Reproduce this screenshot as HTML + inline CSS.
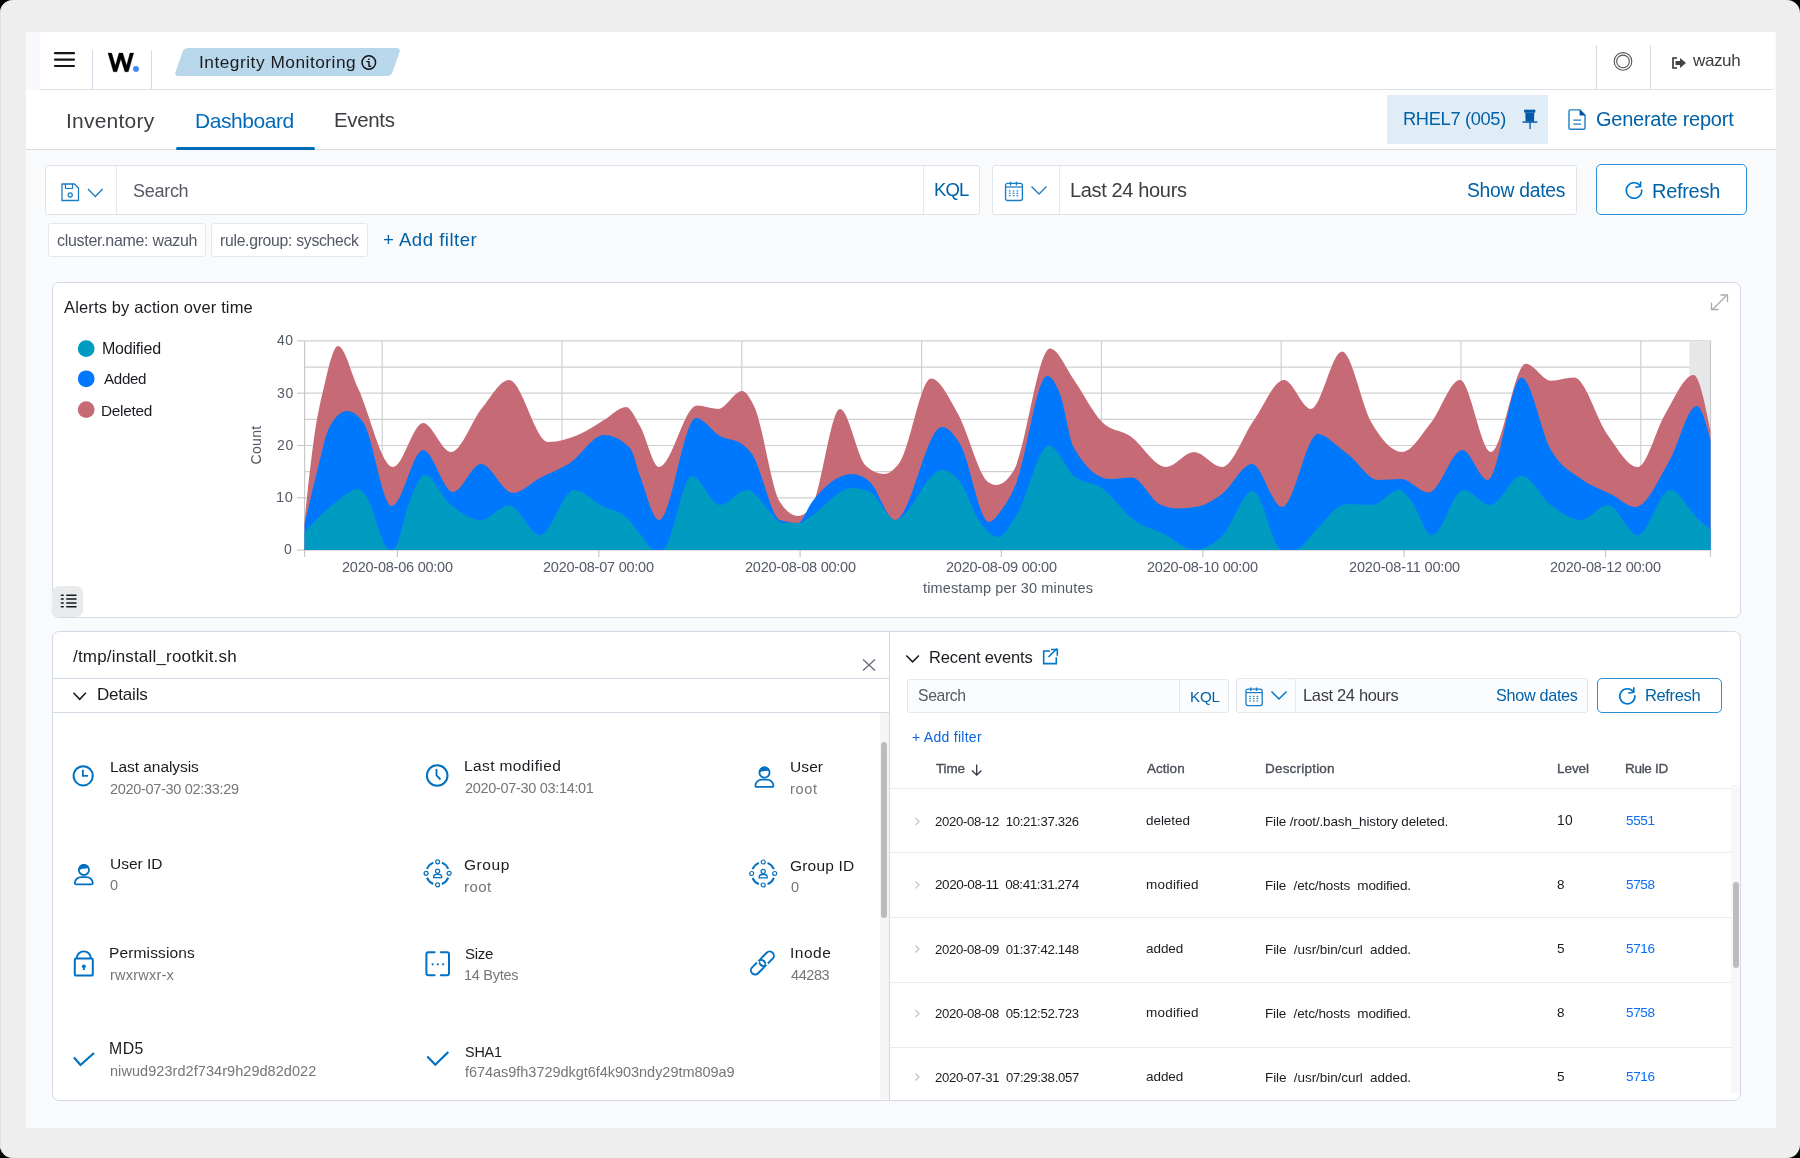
<!DOCTYPE html>
<html><head><meta charset="utf-8"><style>
html,body{margin:0;padding:0;width:1800px;height:1158px;overflow:hidden;background:#000}
body{position:relative;font-family:"Liberation Sans",sans-serif}
.t{position:absolute;white-space:pre;line-height:1;font-family:"Liberation Sans",sans-serif;-webkit-font-smoothing:antialiased;will-change:transform}
</style></head><body>
<div style="position:absolute;left:0px;top:0px;width:1800px;height:1158px;background:#000"></div>
<div style="position:absolute;left:0px;top:0px;width:1800px;height:1158px;background:#eeeeee;border-radius:13px;box-shadow:inset 1px 0 0 #e2e2e2"></div>
<div style="position:absolute;left:26px;top:32px;width:1750px;height:1096px;background:#f9fafc"></div>
<div style="position:absolute;left:26px;top:32px;width:1748px;height:58px;background:#fff"></div>
<div style="position:absolute;left:26px;top:32px;width:14px;height:58px;background:#f7f9fc"></div>
<div style="position:absolute;left:40px;top:89px;width:1733px;height:1.2px;background:#dcdfe4"></div>
<div style="position:absolute;left:92px;top:50px;width:1px;height:39px;background:#d3dae6"></div>
<div style="position:absolute;left:151px;top:50px;width:1px;height:39px;background:#d3dae6"></div>
<div style="position:absolute;left:1596px;top:45px;width:1px;height:44px;background:#d9d9d9"></div>
<div style="position:absolute;left:1650px;top:45px;width:1px;height:44px;background:#d9d9d9"></div>
<div style="position:absolute;left:178.7px;top:48px;width:217.4px;height:28.3px;background:#b9d7ea;border-radius:4px;transform:skewX(-19.5deg)"></div>
<div style="position:absolute;left:26px;top:90px;width:1750px;height:59px;background:#fff"></div>
<div style="position:absolute;left:26px;top:149px;width:1750px;height:1px;background:#d9dce1"></div>
<div style="position:absolute;left:176px;top:147px;width:139px;height:3px;background:#006bb8;border-radius:2px"></div>
<div style="position:absolute;left:1387px;top:94.5px;width:161px;height:49.5px;background:#e0ecf6"></div>
<div style="position:absolute;left:45px;top:165px;width:935px;height:50px;background:#fff;border:1px solid #e0e3e8;border-radius:3px;box-sizing:border-box"></div>
<div style="position:absolute;left:116px;top:166px;width:1px;height:48px;background:#e6e8ec"></div>
<div style="position:absolute;left:923px;top:166px;width:1px;height:48px;background:#e6e8ec"></div>
<div style="position:absolute;left:992px;top:165px;width:585px;height:50px;background:#fff;border:1px solid #e0e3e8;border-radius:3px;box-sizing:border-box"></div>
<div style="position:absolute;left:1059px;top:166px;width:1px;height:48px;background:#e6e8ec"></div>
<div style="position:absolute;left:1596px;top:164px;width:151px;height:51px;background:#fff;border:1.5px solid #2b8fd6;border-radius:5px;box-sizing:border-box"></div>
<div style="position:absolute;left:48px;top:223px;width:158px;height:34px;background:#fff;border:1px solid #e6e8ec;border-radius:3px;box-sizing:border-box"></div>
<div style="position:absolute;left:211px;top:223px;width:157px;height:34px;background:#fff;border:1px solid #e6e8ec;border-radius:3px;box-sizing:border-box"></div>
<div style="position:absolute;left:51.5px;top:281.5px;width:1689.5px;height:336px;background:#fff;border:1px solid #d3dae6;border-radius:7px;box-sizing:border-box"></div>
<div style="position:absolute;left:52px;top:586px;width:31px;height:31px;background:#e9eaeb;border-radius:7px 7px 7px 7px"></div>
<div style="position:absolute;left:51.5px;top:630.5px;width:1689.5px;height:470px;background:#fff;border:1px solid #d3dae6;border-radius:7px;box-sizing:border-box"></div>
<div style="position:absolute;left:889px;top:631px;width:1px;height:469px;background:#d3dae6"></div>
<div style="position:absolute;left:52px;top:678px;width:837px;height:1px;background:#d3dae6"></div>
<div style="position:absolute;left:52px;top:712px;width:837px;height:1px;background:#d3dae6"></div>
<div style="position:absolute;left:880px;top:713px;width:9px;height:386px;background:#f5f5f5"></div>
<div style="position:absolute;left:881px;top:742px;width:6px;height:176px;background:#bcbcbc;border-radius:3px"></div>
<div style="position:absolute;left:906.5px;top:678.5px;width:322px;height:34px;background:#fbfcfd;border:1px solid #e3e6ea;border-radius:3px;box-sizing:border-box"></div>
<div style="position:absolute;left:1178.5px;top:679px;width:1px;height:33px;background:#e6e8ec"></div>
<div style="position:absolute;left:1236px;top:678px;width:352px;height:35px;background:#fbfcfd;border:1px solid #e3e6ea;border-radius:3px;box-sizing:border-box"></div>
<div style="position:absolute;left:1295px;top:679px;width:1px;height:33px;background:#e6e8ec"></div>
<div style="position:absolute;left:1597px;top:678px;width:125px;height:35px;background:#fff;border:1.5px solid #2b8fd6;border-radius:5px;box-sizing:border-box"></div>
<div style="position:absolute;left:890px;top:788px;width:841px;height:1.2px;background:#e9ebee"></div>
<div style="position:absolute;left:890px;top:852px;width:841px;height:1.2px;background:#e9ebee"></div>
<div style="position:absolute;left:890px;top:916.5px;width:841px;height:1.2px;background:#e9ebee"></div>
<div style="position:absolute;left:890px;top:981.5px;width:841px;height:1.2px;background:#e9ebee"></div>
<div style="position:absolute;left:890px;top:1047px;width:841px;height:1.2px;background:#e9ebee"></div>
<div style="position:absolute;left:1731px;top:785px;width:9px;height:308px;background:#f7f7f7"></div>
<div style="position:absolute;left:1732.5px;top:882px;width:6px;height:86px;background:#bcbcbc;border-radius:3px"></div>
<svg style="position:absolute;left:0;top:0" width="1800" height="1158" viewBox="0 0 1800 1158"><line x1="55" y1="53.2" x2="74" y2="53.2" stroke="#15171c" stroke-width="2.2" stroke-linecap="round"/><line x1="55" y1="59.6" x2="74" y2="59.6" stroke="#15171c" stroke-width="2.2" stroke-linecap="round"/><line x1="55" y1="66" x2="74" y2="66" stroke="#15171c" stroke-width="2.2" stroke-linecap="round"/><circle cx="136" cy="68.9" r="2.9" fill="#3a86f5"/><path d="M108,53 L111.7,53 L115.4,65.6 L119,53 L122.7,53 L126.6,65.4 L130,53 L133.7,53 L128.3,71.8 L124.9,71.8 L120.85,58.9 L116.9,71.8 L113.4,71.8 Z" fill="#000" stroke="#000" stroke-width="0.3" stroke-linejoin="round"/><circle cx="368.8" cy="62.5" r="6.8" fill="none" stroke="#111" stroke-width="1.5"/><path d="M366.9,61.6 h2.1 v4.6 h1.5" fill="none" stroke="#111" stroke-width="1.4" stroke-linecap="round" stroke-linejoin="round"/><rect x="368.1" y="58.4" width="1.6" height="1.5" rx="0.5" fill="#111"/><circle cx="1623" cy="61.4" r="8.8" fill="none" stroke="#555" stroke-width="1.1"/><circle cx="1623" cy="61.4" r="6.3" fill="none" stroke="#555" stroke-width="1.1"/><path d="M1677,58 h-4 v10 h4" fill="none" stroke="#333" stroke-width="1.6"/><path d="M1675.5,61 h4.5 v-3 l6,5 l-6,5 v-3 h-4.5z" fill="#444"/><rect x="1524.1" y="109.7" width="11.2" height="2.9" fill="#0058a8"/><path d="M1525.3,112.5 h9 l-0.3,9 h-8.4z" fill="#0058a8"/><rect x="1522.6" y="121.3" width="14.6" height="1.5" fill="#0058a8"/><rect x="1529.4" y="122.5" width="1.3" height="6.6" fill="#0058a8"/><path d="M1570.2,109.9 h9.8 l5,5 v13.1 a1.2,1.2 0 0 1 -1.2,1.2 h-13.6 a1.2,1.2 0 0 1 -1.2,-1.2 v-16.9 a1.2,1.2 0 0 1 1.2,-1.2z" fill="none" stroke="#1f7fc4" stroke-width="1.4" stroke-linejoin="round"/><path d="M1579.6,109.6 l5.9,5.9 h-5.9z" fill="#0050a0"/><path d="M1573.2,120.2 h7.8 M1573.2,124.1 h7.8" stroke="#1f7fc4" stroke-width="1.3"/><path d="M62,184 h12.5 l4,4 v12.5 h-16.5z" fill="none" stroke="#1a7cc4" stroke-width="1.3" stroke-linejoin="round"/><path d="M65.5,184 v4.5 h7 v-4.5" fill="none" stroke="#1a7cc4" stroke-width="1.2"/><circle cx="70.2" cy="195" r="2.1" fill="none" stroke="#1a7cc4" stroke-width="1.2"/><path d="M88,189 l7.3,7.5 l7.3,-7.5" fill="none" stroke="#1a7cc4" stroke-width="1.3"/><g transform="translate(1004.5,181.4) scale(1.04)"><rect x="1.0" y="1.9" width="16.2" height="16.5" rx="2" fill="none" stroke="#1a7cc4" stroke-width="1.3"/><path d="M1,5.4 h16.2" stroke="#1a7cc4" stroke-width="1.2"/><path d="M5.8,0.3 v3.6 M11.5,0.3 v3.6" stroke="#1a7cc4" stroke-width="1.4"/><rect x="4.15" y="8.649999999999999" width="1.7" height="1.1" fill="#1a7cc4"/><rect x="7.85" y="8.649999999999999" width="1.7" height="1.1" fill="#1a7cc4"/><rect x="11.55" y="8.649999999999999" width="1.7" height="1.1" fill="#1a7cc4"/><rect x="4.15" y="10.85" width="1.7" height="1.1" fill="#1a7cc4"/><rect x="7.85" y="10.85" width="1.7" height="1.1" fill="#1a7cc4"/><rect x="11.55" y="10.85" width="1.7" height="1.1" fill="#1a7cc4"/><rect x="4.15" y="13.25" width="1.7" height="1.1" fill="#1a7cc4"/><rect x="7.85" y="13.25" width="1.7" height="1.1" fill="#1a7cc4"/><rect x="11.55" y="13.25" width="1.7" height="1.1" fill="#1a7cc4"/></g><path d="M1031.5,186.5 l7.5,7.5 l7.5,-7.5" fill="none" stroke="#1a7cc4" stroke-width="1.3"/><path d="M1641.68,189.96 A7.7,7.7 0 1 1 1640.53,186.42" fill="none" stroke="#0077cc" stroke-width="1.6" stroke-linecap="round"/><path d="M1640.63,182.02 L1640.53,186.42 L1635.73,187.22" fill="none" stroke="#0077cc" stroke-width="1.6" stroke-linecap="round" stroke-linejoin="round"/><path d="M1712,300 l14,-14" stroke="#aaa" stroke-width="1.3" transform="translate(0,10)"/><path d="M1720.5,295 h7 v7 M1711.5,302.5 v7 h7" fill="none" stroke="#aaa" stroke-width="1.3"/><path d="M61.4,595.3 h1.8 M66.8,595.3 h9.2" stroke="#15171c" stroke-width="1.5" stroke-linecap="round"/><path d="M61.4,599.1 h1.8 M66.8,599.1 h9.2" stroke="#15171c" stroke-width="1.5" stroke-linecap="round"/><path d="M61.4,602.9 h1.8 M66.8,602.9 h9.2" stroke="#15171c" stroke-width="1.5" stroke-linecap="round"/><path d="M61.4,606.7 h1.8 M66.8,606.7 h9.2" stroke="#15171c" stroke-width="1.5" stroke-linecap="round"/><circle cx="86.2" cy="348.6" r="8.4" fill="#009bc0"/><circle cx="86.2" cy="378.8" r="8.4" fill="#0078fd"/><circle cx="86.2" cy="409.6" r="8.4" fill="#c66b75"/><line x1="304.6" y1="340.90" x2="1710.5" y2="340.90" stroke="#d0d0d0" stroke-width="1.2"/><line x1="304.6" y1="367.05" x2="1710.5" y2="367.05" stroke="#d0d0d0" stroke-width="1.2"/><line x1="304.6" y1="393.20" x2="1710.5" y2="393.20" stroke="#d0d0d0" stroke-width="1.2"/><line x1="304.6" y1="419.35" x2="1710.5" y2="419.35" stroke="#d0d0d0" stroke-width="1.2"/><line x1="304.6" y1="445.50" x2="1710.5" y2="445.50" stroke="#d0d0d0" stroke-width="1.2"/><line x1="304.6" y1="471.65" x2="1710.5" y2="471.65" stroke="#d0d0d0" stroke-width="1.2"/><line x1="304.6" y1="497.80" x2="1710.5" y2="497.80" stroke="#d0d0d0" stroke-width="1.2"/><line x1="304.6" y1="523.95" x2="1710.5" y2="523.95" stroke="#d0d0d0" stroke-width="1.2"/><line x1="304.6" y1="550.10" x2="1710.5" y2="550.10" stroke="#d0d0d0" stroke-width="1.2"/><line x1="382.2" y1="340.9" x2="382.2" y2="550.1" stroke="#d0d0d0" stroke-width="1.2"/><line x1="562" y1="340.9" x2="562" y2="550.1" stroke="#d0d0d0" stroke-width="1.2"/><line x1="741.8" y1="340.9" x2="741.8" y2="550.1" stroke="#d0d0d0" stroke-width="1.2"/><line x1="921.6" y1="340.9" x2="921.6" y2="550.1" stroke="#d0d0d0" stroke-width="1.2"/><line x1="1101.4" y1="340.9" x2="1101.4" y2="550.1" stroke="#d0d0d0" stroke-width="1.2"/><line x1="1281.2" y1="340.9" x2="1281.2" y2="550.1" stroke="#d0d0d0" stroke-width="1.2"/><line x1="1461" y1="340.9" x2="1461" y2="550.1" stroke="#d0d0d0" stroke-width="1.2"/><line x1="1640.8" y1="340.9" x2="1640.8" y2="550.1" stroke="#d0d0d0" stroke-width="1.2"/><rect x="1689.4" y="340.9" width="21.09999999999991" height="209.20000000000005" fill="#e6e7e8"/><line x1="1710.5" y1="340.9" x2="1710.5" y2="550.1" stroke="#c8c8c8" stroke-width="1.2"/><line x1="304.6" y1="340.9" x2="304.6" y2="557.1" stroke="#c8c8c8" stroke-width="1.2"/><line x1="297" y1="340.90" x2="304.6" y2="340.90" stroke="#c8c8c8" stroke-width="1.2"/><line x1="297" y1="393.20" x2="304.6" y2="393.20" stroke="#c8c8c8" stroke-width="1.2"/><line x1="297" y1="445.50" x2="304.6" y2="445.50" stroke="#c8c8c8" stroke-width="1.2"/><line x1="297" y1="497.80" x2="304.6" y2="497.80" stroke="#c8c8c8" stroke-width="1.2"/><line x1="297" y1="550.10" x2="304.6" y2="550.10" stroke="#c8c8c8" stroke-width="1.2"/><line x1="397.4" y1="550.1" x2="397.4" y2="557.1" stroke="#c8c8c8" stroke-width="1.2"/><line x1="598.8" y1="550.1" x2="598.8" y2="557.1" stroke="#c8c8c8" stroke-width="1.2"/><line x1="800.1" y1="550.1" x2="800.1" y2="557.1" stroke="#c8c8c8" stroke-width="1.2"/><line x1="1001.4" y1="550.1" x2="1001.4" y2="557.1" stroke="#c8c8c8" stroke-width="1.2"/><line x1="1202.8" y1="550.1" x2="1202.8" y2="557.1" stroke="#c8c8c8" stroke-width="1.2"/><line x1="1404.2" y1="550.1" x2="1404.2" y2="557.1" stroke="#c8c8c8" stroke-width="1.2"/><line x1="1605.5" y1="550.1" x2="1605.5" y2="557.1" stroke="#c8c8c8" stroke-width="1.2"/><line x1="1710.5" y1="550.1" x2="1710.5" y2="557.1" stroke="#c8c8c8" stroke-width="1.2"/><path d="M304.6,520.0C308.2,485.6 311.9,451.1 315.5,428.0C318.0,412.1 320.5,401.7 323.0,391.0C328.0,369.6 333.0,346.0 338.0,346.0C344.7,346.0 351.3,373.6 358.0,388.0C369.7,413.2 381.3,467.0 393.0,467.0C403.0,467.0 413.0,423.0 423.0,423.0C432.3,423.0 441.7,452.0 451.0,452.0C461.3,452.0 471.7,420.6 482.0,408.0C491.0,397.1 500.0,380.0 509.0,380.0C522.0,380.0 535.0,442.0 548.0,442.0C558.7,442.0 569.3,438.7 580.0,434.0C588.0,430.5 596.0,424.7 604.0,420.0C611.3,415.7 618.7,407.0 626.0,407.0C630.7,407.0 635.3,418.1 640.0,426.0C646.3,436.7 652.7,467.0 659.0,467.0C671.7,467.0 684.3,405.6 697.0,405.6C704.0,405.6 711.0,409.0 718.0,409.0C726.0,409.0 734.0,391.0 742.0,391.0C746.0,391.0 750.0,397.9 754.0,406.0C762.7,423.5 771.3,488.5 780.0,502.0C786.0,511.3 792.0,516.0 798.0,516.0C802.7,516.0 807.3,512.7 812.0,506.0C821.3,492.7 830.7,409.0 840.0,409.0C848.7,409.0 857.3,458.3 866.0,466.0C872.0,471.3 878.0,474.0 884.0,474.0C889.3,474.0 894.7,469.5 900.0,462.0C910.3,447.4 920.7,378.6 931.0,378.6C940.0,378.6 949.0,398.1 958.0,414.0C968.0,431.6 978.0,474.5 988.0,482.0C990.7,484.0 993.3,485.0 996.0,485.0C1002.0,485.0 1008.0,480.0 1014.0,470.0C1026.0,450.0 1038.0,348.6 1050.0,348.6C1058.0,348.6 1066.0,368.8 1074.0,380.0C1083.3,393.0 1092.7,412.7 1102.0,422.0C1111.3,431.3 1120.7,429.9 1130.0,436.0C1142.0,443.9 1154.0,467.0 1166.0,467.0C1175.3,467.0 1184.7,452.0 1194.0,452.0C1203.3,452.0 1212.7,467.0 1222.0,467.0C1232.7,467.0 1243.3,434.9 1254.0,420.0C1264.0,406.0 1274.0,380.0 1284.0,380.0C1293.0,380.0 1302.0,409.0 1311.0,409.0C1321.3,409.0 1331.7,351.6 1342.0,351.6C1351.9,351.6 1361.8,406.3 1371.7,423.0C1381.8,440.0 1391.9,452.0 1402.0,452.0C1411.6,452.0 1421.2,434.9 1430.8,423.0C1440.5,410.9 1450.3,380.0 1460.0,380.0C1470.3,380.0 1480.7,452.0 1491.0,452.0C1502.6,452.0 1514.2,363.8 1525.8,363.8C1534.2,363.8 1542.6,380.7 1551.0,380.7C1558.7,380.7 1566.3,377.5 1574.0,377.5C1585.3,377.5 1596.7,420.1 1608.0,435.5C1617.9,449.0 1627.8,467.0 1637.7,467.0C1646.8,467.0 1655.9,429.5 1665.0,414.4C1674.5,398.6 1684.1,375.0 1693.6,375.0C1699.2,375.0 1704.9,403.0 1710.5,431.0L1710.5,550.1L304.6,550.1Z" fill="#c66b75"/><path d="M304.6,524.0C308.4,507.5 312.2,490.9 316.0,476.0C320.7,457.7 325.3,434.2 330.0,426.0C335.7,416.0 341.3,411.0 347.0,411.0C352.3,411.0 357.7,414.7 363.0,422.0C372.7,435.3 382.3,506.0 392.0,506.0C402.3,506.0 412.7,450.0 423.0,450.0C433.0,450.0 443.0,492.0 453.0,492.0C462.3,492.0 471.7,464.0 481.0,464.0C491.7,464.0 502.3,493.0 513.0,493.0C522.0,493.0 531.0,482.8 540.0,478.0C550.0,472.7 560.0,469.5 570.0,463.0C581.3,455.6 592.7,435.0 604.0,435.0C612.7,435.0 621.3,439.3 630.0,448.0C633.3,451.3 636.7,467.2 640.0,476.0C646.3,492.7 652.7,520.0 659.0,520.0C671.3,520.0 683.7,418.0 696.0,418.0C704.0,418.0 712.0,431.6 720.0,436.0C727.3,440.0 734.7,438.7 742.0,444.0C745.3,446.4 748.7,449.5 752.0,454.0C761.3,466.7 770.7,516.9 780.0,520.0C786.0,522.0 792.0,523.0 798.0,523.0C802.7,523.0 807.3,508.0 812.0,502.0C825.3,484.8 838.7,474.0 852.0,474.0C858.0,474.0 864.0,476.7 870.0,482.0C878.3,489.4 886.7,520.0 895.0,520.0C910.7,520.0 926.3,427.0 942.0,427.0C948.0,427.0 954.0,434.3 960.0,444.0C969.7,459.6 979.3,522.0 989.0,522.0C992.7,522.0 996.3,516.6 1000.0,512.0C1005.3,505.3 1010.7,496.5 1016.0,484.0C1026.3,459.8 1036.7,376.0 1047.0,376.0C1051.3,376.0 1055.7,382.8 1060.0,394.0C1064.7,406.0 1069.3,440.0 1074.0,448.0C1086.0,468.7 1098.0,479.0 1110.0,479.0C1117.3,479.0 1124.7,477.6 1132.0,477.6C1141.3,477.6 1150.7,500.4 1160.0,504.5C1166.0,507.2 1172.0,508.5 1178.0,508.5C1184.7,508.5 1191.3,507.8 1198.0,506.5C1206.0,504.9 1214.0,499.9 1222.0,494.0C1232.0,486.7 1242.0,464.0 1252.0,464.0C1262.0,464.0 1272.0,507.0 1282.0,507.0C1294.0,507.0 1306.0,434.0 1318.0,434.0C1325.3,434.0 1332.7,442.5 1340.0,448.0C1343.3,450.5 1346.7,453.3 1350.0,456.0C1359.3,463.6 1368.7,480.0 1378.0,480.0C1385.7,480.0 1393.3,479.0 1401.0,479.0C1410.2,479.0 1419.5,492.5 1428.7,492.5C1439.9,492.5 1451.2,450.0 1462.4,450.0C1470.9,450.0 1479.3,480.0 1487.8,480.0C1499.0,480.0 1510.3,377.5 1521.5,377.5C1531.3,377.5 1541.2,433.0 1551.0,450.0C1561.6,468.3 1572.2,472.4 1582.8,480.0C1592.5,486.9 1602.3,489.7 1612.0,494.7C1619.8,498.7 1627.7,507.0 1635.5,507.0C1646.8,507.0 1658.0,480.3 1669.3,461.0C1678.5,445.3 1687.6,406.0 1696.8,406.0C1701.4,406.0 1705.9,422.9 1710.5,439.8L1710.5,550.1L304.6,550.1Z" fill="#0078fd"/><path d="M304.6,532.0C315.1,520.9 325.5,509.8 336.0,502.0C343.3,496.6 350.7,489.0 358.0,489.0C360.7,489.0 363.3,492.8 366.0,496.0C374.0,505.8 382.0,550.0 390.0,550.0C391.3,550.0 392.7,549.7 394.0,549.0C399.3,546.3 404.7,512.5 410.0,500.0C415.0,488.3 420.0,475.0 425.0,475.0C433.3,475.0 441.7,496.7 450.0,504.0C460.3,513.0 470.7,520.0 481.0,520.0C490.3,520.0 499.7,505.6 509.0,505.6C519.3,505.6 529.7,535.0 540.0,535.0C551.3,535.0 562.7,490.0 574.0,490.0C583.3,490.0 592.7,501.0 602.0,506.0C610.7,510.6 619.3,510.3 628.0,519.0C632.0,523.0 636.0,529.3 640.0,534.0C645.0,539.8 650.0,550.0 655.0,550.0C657.3,550.0 659.7,550.0 662.0,550.0C672.0,550.0 682.0,476.0 692.0,476.0C701.3,476.0 710.7,505.0 720.0,505.0C729.0,505.0 738.0,490.0 747.0,490.0C759.3,490.0 771.7,523.0 784.0,523.0C789.3,523.0 794.7,523.0 800.0,523.0C803.3,523.0 806.7,519.1 810.0,517.0C824.0,508.4 838.0,488.0 852.0,488.0C858.0,488.0 864.0,489.3 870.0,492.0C878.3,495.7 886.7,520.0 895.0,520.0C910.7,520.0 926.3,470.0 942.0,470.0C948.0,470.0 954.0,474.2 960.0,482.0C966.7,490.7 973.3,512.8 980.0,522.0C986.0,530.3 992.0,537.0 998.0,537.0C1004.0,537.0 1010.0,525.0 1016.0,516.0C1027.0,499.4 1038.0,445.6 1049.0,445.6C1057.3,445.6 1065.7,469.0 1074.0,476.0C1083.3,483.9 1092.7,481.5 1102.0,488.0C1112.7,495.4 1123.3,512.3 1134.0,520.0C1144.0,527.2 1154.0,529.0 1164.0,534.0C1174.0,539.0 1184.0,550.0 1194.0,550.0C1203.3,550.0 1212.7,544.9 1222.0,536.0C1232.3,526.2 1242.7,491.0 1253.0,491.0C1262.7,491.0 1272.3,550.0 1282.0,550.0C1286.0,550.0 1290.0,550.0 1294.0,550.0C1302.0,550.0 1310.0,535.7 1318.0,528.0C1325.3,521.0 1332.7,509.3 1340.0,506.0C1342.7,504.8 1345.3,504.0 1348.0,504.0C1356.0,504.0 1364.0,505.0 1372.0,505.0C1381.0,505.0 1390.0,490.0 1399.0,490.0C1402.7,490.0 1406.3,495.0 1410.0,499.0C1417.3,507.0 1424.7,535.0 1432.0,535.0C1442.5,535.0 1453.0,490.0 1463.5,490.0C1472.3,490.0 1481.2,505.0 1490.0,505.0C1500.5,505.0 1511.0,475.7 1521.5,475.7C1531.3,475.7 1541.2,497.6 1551.0,505.0C1560.9,512.4 1570.8,520.0 1580.7,520.0C1589.8,520.0 1598.9,505.0 1608.0,505.0C1617.9,505.0 1627.8,535.0 1637.7,535.0C1648.5,535.0 1659.2,490.0 1670.0,490.0C1679.7,490.0 1689.3,511.4 1699.0,520.0C1702.8,523.4 1706.7,526.4 1710.5,529.5L1710.5,550.1L304.6,550.1Z" fill="#009bc0"/><path d="M863,659.5 l12,11 M875,659.5 l-12,11" stroke="#69707d" stroke-width="1.4"/><path d="M73.5,692.8 l6.2,6.5 l6.2,-6.5" fill="none" stroke="#1a1c21" stroke-width="1.6"/><path d="M906.3,655.5 l6.3,6.3 l6.3,-6.3" fill="none" stroke="#1a1c21" stroke-width="1.6"/><path d="M1050,651 h-6.3 v12.6 h12.6 v-6.3" fill="none" stroke="#0077cc" stroke-width="1.6"/><path d="M1048.5,657 l8.5,-8.5 M1051,649.5 h6.3 v6.3" fill="none" stroke="#0077cc" stroke-width="1.6"/><g transform="translate(1245,687.2) scale(1.0)"><rect x="1.0" y="1.9" width="16.2" height="16.5" rx="2" fill="none" stroke="#1a7cc4" stroke-width="1.3"/><path d="M1,5.4 h16.2" stroke="#1a7cc4" stroke-width="1.2"/><path d="M5.8,0.3 v3.6 M11.5,0.3 v3.6" stroke="#1a7cc4" stroke-width="1.4"/><rect x="4.15" y="8.649999999999999" width="1.7" height="1.1" fill="#1a7cc4"/><rect x="7.85" y="8.649999999999999" width="1.7" height="1.1" fill="#1a7cc4"/><rect x="11.55" y="8.649999999999999" width="1.7" height="1.1" fill="#1a7cc4"/><rect x="4.15" y="10.85" width="1.7" height="1.1" fill="#1a7cc4"/><rect x="7.85" y="10.85" width="1.7" height="1.1" fill="#1a7cc4"/><rect x="11.55" y="10.85" width="1.7" height="1.1" fill="#1a7cc4"/><rect x="4.15" y="13.25" width="1.7" height="1.1" fill="#1a7cc4"/><rect x="7.85" y="13.25" width="1.7" height="1.1" fill="#1a7cc4"/><rect x="11.55" y="13.25" width="1.7" height="1.1" fill="#1a7cc4"/></g><path d="M1271.5,691.5 l7.5,7.5 l7.5,-7.5" fill="none" stroke="#0077cc" stroke-width="1.5"/><path d="M1634.88,695.77 A7.6,7.6 0 1 1 1633.75,692.27" fill="none" stroke="#0077cc" stroke-width="1.6" stroke-linecap="round"/><path d="M1633.85,687.87 L1633.75,692.27 L1628.95,693.07" fill="none" stroke="#0077cc" stroke-width="1.6" stroke-linecap="round" stroke-linejoin="round"/><path d="M976.7,764.5 v10.5 M972,770.5 l4.7,4.7 l4.7,-4.7" fill="none" stroke="#343741" stroke-width="1.3"/><path d="M915.5,817.9 l3.5,3.5 l-3.5,3.5" fill="none" stroke="#b8c2d0" stroke-width="1.2"/><path d="M915.5,881.3 l3.5,3.5 l-3.5,3.5" fill="none" stroke="#b8c2d0" stroke-width="1.2"/><path d="M915.5,945.5 l3.5,3.5 l-3.5,3.5" fill="none" stroke="#b8c2d0" stroke-width="1.2"/><path d="M915.5,1010.0 l3.5,3.5 l-3.5,3.5" fill="none" stroke="#b8c2d0" stroke-width="1.2"/><path d="M915.5,1073.5 l3.5,3.5 l-3.5,3.5" fill="none" stroke="#b8c2d0" stroke-width="1.2"/><circle cx="83.2" cy="775.8" r="9.6" fill="none" stroke="#0071c2" stroke-width="2"/><path d="M82.9,769.8 v6 h5" fill="none" stroke="#0071c2" stroke-width="1.8"/><circle cx="437.2" cy="775.5" r="10.3" fill="none" stroke="#0071c2" stroke-width="2"/><path d="M436.5,769 v6.5 l4,4" fill="none" stroke="#0071c2" stroke-width="1.8"/><g transform="translate(74,864)"><circle cx="9.9" cy="5.9" r="5.1" fill="none" stroke="#0071c2" stroke-width="1.8"/><path d="M4.8,5.9 Q9,3.9 14.9,4.2 A5.1,5.1 0 0 0 4.8,5.9 Z" fill="#0071c2"/><path d="M2.2,20.3 h15.4 a1.2,1.2 0 0 0 1.2,-1.2 c0,-3.6 -3,-6 -6.6,-6 h-4.8 c-3.6,0 -6.6,2.4 -6.6,6 a1.2,1.2 0 0 0 1.2,1.2 z" fill="none" stroke="#0071c2" stroke-width="1.8" stroke-linejoin="round"/></g><g transform="translate(754.6,766.6)"><circle cx="9.9" cy="5.9" r="5.1" fill="none" stroke="#0071c2" stroke-width="1.8"/><path d="M4.8,5.9 Q9,3.9 14.9,4.2 A5.1,5.1 0 0 0 4.8,5.9 Z" fill="#0071c2"/><path d="M2.2,20.3 h15.4 a1.2,1.2 0 0 0 1.2,-1.2 c0,-3.6 -3,-6 -6.6,-6 h-4.8 c-3.6,0 -6.6,2.4 -6.6,6 a1.2,1.2 0 0 0 1.2,1.2 z" fill="none" stroke="#0071c2" stroke-width="1.8" stroke-linejoin="round"/></g><g transform="translate(437.6,873.3)"><path d="M10.66,4.31 A11.5,11.5 0 0 1 4.31,10.66" fill="none" stroke="#0071c2" stroke-width="2"/><path d="M-4.31,10.66 A11.5,11.5 0 0 1 -10.66,4.31" fill="none" stroke="#0071c2" stroke-width="2"/><path d="M-10.66,-4.31 A11.5,11.5 0 0 1 -4.31,-10.66" fill="none" stroke="#0071c2" stroke-width="2"/><path d="M4.31,-10.66 A11.5,11.5 0 0 1 10.66,-4.31" fill="none" stroke="#0071c2" stroke-width="2"/><circle cx="11.50" cy="0.00" r="2" fill="#fff" stroke="#0071c2" stroke-width="1.2"/><circle cx="0.00" cy="11.50" r="2" fill="#fff" stroke="#0071c2" stroke-width="1.2"/><circle cx="-11.50" cy="0.00" r="2" fill="#fff" stroke="#0071c2" stroke-width="1.2"/><circle cx="-0.00" cy="-11.50" r="2" fill="#fff" stroke="#0071c2" stroke-width="1.2"/><circle cx="0" cy="-2" r="2.1" fill="none" stroke="#0071c2" stroke-width="1.3"/><path d="M-4,4.3 v-0.8 c0,-1.6 1.3,-2.5 3,-2.5 h2 c1.7,0 3,0.9 3,2.5 v0.8 z" fill="none" stroke="#0071c2" stroke-width="1.3"/></g><g transform="translate(763.2,873.5)"><path d="M10.66,4.31 A11.5,11.5 0 0 1 4.31,10.66" fill="none" stroke="#0071c2" stroke-width="2"/><path d="M-4.31,10.66 A11.5,11.5 0 0 1 -10.66,4.31" fill="none" stroke="#0071c2" stroke-width="2"/><path d="M-10.66,-4.31 A11.5,11.5 0 0 1 -4.31,-10.66" fill="none" stroke="#0071c2" stroke-width="2"/><path d="M4.31,-10.66 A11.5,11.5 0 0 1 10.66,-4.31" fill="none" stroke="#0071c2" stroke-width="2"/><circle cx="11.50" cy="0.00" r="2" fill="#fff" stroke="#0071c2" stroke-width="1.2"/><circle cx="0.00" cy="11.50" r="2" fill="#fff" stroke="#0071c2" stroke-width="1.2"/><circle cx="-11.50" cy="0.00" r="2" fill="#fff" stroke="#0071c2" stroke-width="1.2"/><circle cx="-0.00" cy="-11.50" r="2" fill="#fff" stroke="#0071c2" stroke-width="1.2"/><circle cx="0" cy="-2" r="2.1" fill="none" stroke="#0071c2" stroke-width="1.3"/><path d="M-4,4.3 v-0.8 c0,-1.6 1.3,-2.5 3,-2.5 h2 c1.7,0 3,0.9 3,2.5 v0.8 z" fill="none" stroke="#0071c2" stroke-width="1.3"/></g><path d="M76.6,958.6 a7.2,7.2 0 0 1 14.4,0" fill="none" stroke="#0071c2" stroke-width="1.9"/><rect x="74.8" y="958.6" width="18" height="17" rx="1.2" fill="none" stroke="#0071c2" stroke-width="2"/><circle cx="83.8" cy="966.3" r="1.9" fill="#0071c2"/><path d="M82.6,970 l0.7,-3 h1 l0.7,3z" fill="#0071c2"/><path d="M434.6,952.3 h-6.2 a2,2 0 0 0 -2,2 v19 a2,2 0 0 0 2,2 h6.2 M440.8,952.3 h6.2 a2,2 0 0 1 2,2 v19 a2,2 0 0 1 -2,2 h-6.2" fill="none" stroke="#0071c2" stroke-width="2" stroke-linecap="round"/><circle cx="432.6" cy="964.3" r="1.1" fill="#0071c2"/><circle cx="437.8" cy="964.3" r="1.1" fill="#0071c2"/><circle cx="443.1" cy="964.3" r="1.1" fill="#0071c2"/><g transform="translate(762.4,963) rotate(-45)"><rect x="-14.5" y="-4.2" width="17" height="8.4" rx="4.2" fill="none" stroke="#0071c2" stroke-width="1.9"/><rect x="-2.5" y="-4.2" width="17" height="8.4" rx="4.2" fill="none" stroke="#0071c2" stroke-width="1.9"/><rect x="-3.6" y="-5.5" width="2.2" height="2.6" fill="#fff"/><rect x="1.4" y="2.9" width="2.2" height="2.6" fill="#fff"/></g><path d="M74,1057.5 l6.5,7.5 l13.5,-12" fill="none" stroke="#0071c2" stroke-width="2.2"/><path d="M427.3,1056.6 l8,8.2 l13,-12.8" fill="none" stroke="#0071c2" stroke-width="2.2"/></svg>
<div class="t" style="left:198.50px;top:53.66px;font-size:17.3px;color:#1a1c21;letter-spacing:0.511px;">Integrity Monitoring</div>
<div class="t" style="left:1692.85px;top:51.61px;font-size:17px;color:#3c3d42;letter-spacing:-0.375px;">wazuh</div>
<div class="t" style="left:66.25px;top:109.92px;font-size:21px;color:#3c3d42;letter-spacing:0.231px;">Inventory</div>
<div class="t" style="left:195.30px;top:109.92px;font-size:21px;color:#006bb8;letter-spacing:-0.438px;">Dashboard</div>
<div class="t" style="left:333.50px;top:110.36px;font-size:20.49px;color:#3c3d42;letter-spacing:-0.350px;">Events</div>
<div class="t" style="left:1403.25px;top:110.05px;font-size:18.25px;color:#0061a6;letter-spacing:-0.325px;">RHEL7 (005)</div>
<div class="t" style="left:1596.00px;top:108.57px;font-size:20px;color:#0061a6;letter-spacing:-0.250px;">Generate report</div>
<div class="t" style="left:132.55px;top:182.42px;font-size:18.05px;color:#555a63;letter-spacing:-0.300px;">Search</div>
<div class="t" style="left:934.10px;top:181.04px;font-size:18.5px;color:#0061a6;letter-spacing:-0.9px;">KQL</div>
<div class="t" style="left:1069.60px;top:179.77px;font-size:20px;color:#3c3d42;letter-spacing:-0.354px;">Last 24 hours</div>
<div class="t" style="left:1466.75px;top:180.65px;font-size:19.31px;color:#0061a6;letter-spacing:-0.278px;">Show dates</div>
<div class="t" style="left:1652.25px;top:181.07px;font-size:20px;color:#0061a6;letter-spacing:-0.292px;">Refresh</div>
<div class="t" style="left:56.90px;top:232.66px;font-size:15.99px;color:#535966;letter-spacing:-0.292px;">cluster.name: wazuh</div>
<div class="t" style="left:220.00px;top:232.87px;font-size:15.75px;color:#535966;letter-spacing:-0.289px;">rule.group: syscheck</div>
<div class="t" style="left:382.95px;top:230.76px;font-size:18.6px;color:#0061a6;letter-spacing:0.482px;">+ Add filter</div>
<div class="t" style="left:63.80px;top:299.43px;font-size:16.5px;color:#1a1c21;letter-spacing:0.140px;">Alerts by action over time</div>
<div class="t" style="left:102.25px;top:341.06px;font-size:16px;color:#1a1c21;letter-spacing:-0.207px;">Modified</div>
<div class="t" style="left:103.50px;top:371.36px;font-size:15.17px;color:#1a1c21;letter-spacing:-0.325px;">Added</div>
<div class="t" style="left:101.35px;top:402.66px;font-size:15.4px;color:#1a1c21;letter-spacing:-0.300px;">Deleted</div>
<div class="t" style="left:276.95px;top:333.35px;font-size:14px;color:#535966;letter-spacing:0.350px;">40</div>
<div class="t" style="left:276.70px;top:385.65px;font-size:14px;color:#535966;letter-spacing:0.600px;">30</div>
<div class="t" style="left:276.70px;top:438.25px;font-size:14px;color:#535966;letter-spacing:0.600px;">20</div>
<div class="t" style="left:276.20px;top:490.04px;font-size:14.6px;color:#535966;letter-spacing:0.600px;">10</div>
<div class="t" style="left:284.30px;top:542.45px;font-size:14px;color:#535966;">0</div>
<div class="t" style="left:341.90px;top:559.93px;font-size:14.5px;color:#535966;letter-spacing:-0.233px;">2020-08-06 00:00</div>
<div class="t" style="left:543.25px;top:559.93px;font-size:14.5px;color:#535966;letter-spacing:-0.233px;">2020-08-07 00:00</div>
<div class="t" style="left:744.60px;top:559.93px;font-size:14.5px;color:#535966;letter-spacing:-0.233px;">2020-08-08 00:00</div>
<div class="t" style="left:945.95px;top:559.93px;font-size:14.5px;color:#535966;letter-spacing:-0.233px;">2020-08-09 00:00</div>
<div class="t" style="left:1147.30px;top:559.93px;font-size:14.5px;color:#535966;letter-spacing:-0.233px;">2020-08-10 00:00</div>
<div class="t" style="left:1348.65px;top:559.93px;font-size:14.5px;color:#535966;letter-spacing:-0.150px;">2020-08-11 00:00</div>
<div class="t" style="left:1550.00px;top:559.93px;font-size:14.5px;color:#535966;letter-spacing:-0.233px;">2020-08-12 00:00</div>
<div class="t" style="left:922.90px;top:581.03px;font-size:14.5px;color:#535966;letter-spacing:0.133px;">timestamp per 30 minutes</div>
<div class="t" style="left:236.0px;top:437.5px;font-size:14px;color:#535966;letter-spacing:0.30px;transform:rotate(-90deg);transform-origin:center center;width:40px;text-align:center">Count</div>
<div class="t" style="left:72.80px;top:648.41px;font-size:17px;color:#1a1c21;letter-spacing:0.180px;">/tmp/install_rootkit.sh</div>
<div class="t" style="left:96.55px;top:686.41px;font-size:17px;color:#1a1c21;letter-spacing:-0.208px;">Details</div>
<div class="t" style="left:109.55px;top:759.38px;font-size:15.5px;color:#1a1c21;letter-spacing:-0.062px;">Last analysis</div>
<div class="t" style="left:110.30px;top:781.93px;font-size:14.5px;color:#747679;letter-spacing:-0.306px;">2020-07-30 02:33:29</div>
<div class="t" style="left:463.75px;top:758.08px;font-size:15.5px;color:#1a1c21;letter-spacing:0.383px;">Last modified</div>
<div class="t" style="left:464.50px;top:781.23px;font-size:14.5px;color:#747679;letter-spacing:-0.317px;">2020-07-30 03:14:01</div>
<div class="t" style="left:790.20px;top:758.88px;font-size:15.5px;color:#1a1c21;letter-spacing:0.100px;">User</div>
<div class="t" style="left:790.45px;top:782.03px;font-size:14.5px;color:#747679;letter-spacing:0.650px;">root</div>
<div class="t" style="left:109.70px;top:855.98px;font-size:15.5px;color:#1a1c21;letter-spacing:-0.008px;">User ID</div>
<div class="t" style="left:110.20px;top:878.43px;font-size:14.5px;color:#747679;">0</div>
<div class="t" style="left:464.25px;top:856.98px;font-size:15.5px;color:#1a1c21;letter-spacing:0.562px;">Group</div>
<div class="t" style="left:464.25px;top:878.99px;font-size:15.01px;color:#747679;letter-spacing:0.450px;">root</div>
<div class="t" style="left:790.45px;top:857.68px;font-size:15.5px;color:#1a1c21;letter-spacing:0.186px;">Group ID</div>
<div class="t" style="left:790.70px;top:879.63px;font-size:14.5px;color:#747679;">0</div>
<div class="t" style="left:109.45px;top:945.48px;font-size:15.5px;color:#1a1c21;letter-spacing:0.145px;">Permissions</div>
<div class="t" style="left:109.95px;top:968.03px;font-size:14.5px;color:#747679;letter-spacing:0.219px;">rwxrwxr-x</div>
<div class="t" style="left:464.50px;top:945.89px;font-size:15.02px;color:#1a1c21;letter-spacing:-0.267px;">Size</div>
<div class="t" style="left:464.00px;top:968.03px;font-size:14.5px;color:#747679;letter-spacing:-0.286px;">14 Bytes</div>
<div class="t" style="left:789.95px;top:945.18px;font-size:15.5px;color:#1a1c21;letter-spacing:0.500px;">Inode</div>
<div class="t" style="left:790.95px;top:967.73px;font-size:14.5px;color:#747679;letter-spacing:-0.425px;">44283</div>
<div class="t" style="left:109.45px;top:1041.30px;font-size:15.83px;color:#1a1c21;letter-spacing:0.450px;">MD5</div>
<div class="t" style="left:109.95px;top:1064.13px;font-size:14.5px;color:#747679;letter-spacing:0.058px;">niwud923rd2f734r9h29d82d022</div>
<div class="t" style="left:464.50px;top:1044.64px;font-size:14.36px;color:#1a1c21;letter-spacing:-0.183px;">SHA1</div>
<div class="t" style="left:465.00px;top:1064.73px;font-size:14.5px;color:#747679;letter-spacing:-0.036px;">f674as9fh3729dkgt6f4k903ndy29tm809a9</div>
<div class="t" style="left:928.65px;top:649.03px;font-size:16.5px;color:#1a1c21;letter-spacing:-0.146px;">Recent events</div>
<div class="t" style="left:917.70px;top:688.47px;font-size:15.75px;color:#555a63;letter-spacing:-0.360px;">Search</div>
<div class="t" style="left:1190.15px;top:688.99px;font-size:15.13px;color:#0061a6;letter-spacing:-0.150px;">KQL</div>
<div class="t" style="left:1302.75px;top:686.83px;font-size:16.5px;color:#3c3d42;letter-spacing:-0.354px;">Last 24 hours</div>
<div class="t" style="left:1495.75px;top:687.08px;font-size:16.21px;color:#0061a6;letter-spacing:-0.300px;">Show dates</div>
<div class="t" style="left:1645.45px;top:687.33px;font-size:16.5px;color:#0061a6;letter-spacing:-0.367px;">Refresh</div>
<div class="t" style="left:911.90px;top:729.85px;font-size:14px;color:#0b64dd;letter-spacing:0.273px;">+ Add filter</div>
<div class="t" style="left:936.45px;top:762.37px;font-size:13.5px;color:#4a4f58;letter-spacing:-0.183px;-webkit-text-stroke:0.35px #4a4f58;">Time</div>
<div class="t" style="left:1146.70px;top:762.37px;font-size:13.5px;color:#4a4f58;letter-spacing:0.030px;-webkit-text-stroke:0.35px #4a4f58;">Action</div>
<div class="t" style="left:1264.50px;top:762.37px;font-size:13.5px;color:#4a4f58;letter-spacing:0.205px;-webkit-text-stroke:0.35px #4a4f58;">Description</div>
<div class="t" style="left:1556.70px;top:762.37px;font-size:13.5px;color:#4a4f58;letter-spacing:-0.050px;-webkit-text-stroke:0.35px #4a4f58;">Level</div>
<div class="t" style="left:1625.00px;top:762.37px;font-size:13.5px;color:#4a4f58;letter-spacing:-0.300px;-webkit-text-stroke:0.35px #4a4f58;">Rule ID</div>
<div class="t" style="left:935.20px;top:814.97px;font-size:13.15px;color:#1a1c21;letter-spacing:-0.313px;">2020-08-12  10:21:37.326</div>
<div class="t" style="left:1146.20px;top:814.17px;font-size:13.5px;color:#1a1c21;letter-spacing:-0.050px;">deleted</div>
<div class="t" style="left:1264.50px;top:815.17px;font-size:13.5px;color:#1a1c21;letter-spacing:-0.158px;">File /root/.bash_history deleted.</div>
<div class="t" style="left:1556.70px;top:813.92px;font-size:13.8px;color:#1a1c21;letter-spacing:0.300px;">10</div>
<div class="t" style="left:1625.50px;top:814.17px;font-size:13.5px;color:#0a6ef2;letter-spacing:-0.333px;">5551</div>
<div class="t" style="left:935.20px;top:878.37px;font-size:13.5px;color:#1a1c21;letter-spacing:-0.443px;">2020-08-11  08:41:31.274</div>
<div class="t" style="left:1145.95px;top:877.87px;font-size:13.5px;color:#1a1c21;letter-spacing:0.214px;">modified</div>
<div class="t" style="left:1264.50px;top:878.87px;font-size:13.5px;color:#1a1c21;letter-spacing:-0.125px;">File  /etc/hosts  modified.</div>
<div class="t" style="left:1557.20px;top:877.87px;font-size:13.5px;color:#1a1c21;">8</div>
<div class="t" style="left:1625.50px;top:877.87px;font-size:13.5px;color:#0a6ef2;letter-spacing:-0.333px;">5758</div>
<div class="t" style="left:935.20px;top:942.67px;font-size:13.15px;color:#1a1c21;letter-spacing:-0.313px;">2020-08-09  01:37:42.148</div>
<div class="t" style="left:1146.20px;top:941.87px;font-size:13.5px;color:#1a1c21;letter-spacing:-0.062px;">added</div>
<div class="t" style="left:1264.50px;top:942.87px;font-size:13.5px;color:#1a1c21;letter-spacing:-0.067px;">File  /usr/bin/curl  added.</div>
<div class="t" style="left:1557.20px;top:941.87px;font-size:13.5px;color:#1a1c21;">5</div>
<div class="t" style="left:1625.50px;top:941.87px;font-size:13.5px;color:#0a6ef2;letter-spacing:-0.333px;">5716</div>
<div class="t" style="left:935.20px;top:1007.17px;font-size:13.15px;color:#1a1c21;letter-spacing:-0.313px;">2020-08-08  05:12:52.723</div>
<div class="t" style="left:1145.95px;top:1006.37px;font-size:13.5px;color:#1a1c21;letter-spacing:0.214px;">modified</div>
<div class="t" style="left:1264.50px;top:1007.37px;font-size:13.5px;color:#1a1c21;letter-spacing:-0.125px;">File  /etc/hosts  modified.</div>
<div class="t" style="left:1557.20px;top:1006.37px;font-size:13.5px;color:#1a1c21;">8</div>
<div class="t" style="left:1625.50px;top:1006.37px;font-size:13.5px;color:#0a6ef2;letter-spacing:-0.333px;">5758</div>
<div class="t" style="left:935.20px;top:1070.67px;font-size:13.15px;color:#1a1c21;letter-spacing:-0.302px;">2020-07-31  07:29:38.057</div>
<div class="t" style="left:1146.20px;top:1069.87px;font-size:13.5px;color:#1a1c21;letter-spacing:-0.062px;">added</div>
<div class="t" style="left:1264.50px;top:1070.87px;font-size:13.5px;color:#1a1c21;letter-spacing:-0.067px;">File  /usr/bin/curl  added.</div>
<div class="t" style="left:1557.20px;top:1069.87px;font-size:13.5px;color:#1a1c21;">5</div>
<div class="t" style="left:1625.50px;top:1069.87px;font-size:13.5px;color:#0a6ef2;letter-spacing:-0.333px;">5716</div>
</body></html>
